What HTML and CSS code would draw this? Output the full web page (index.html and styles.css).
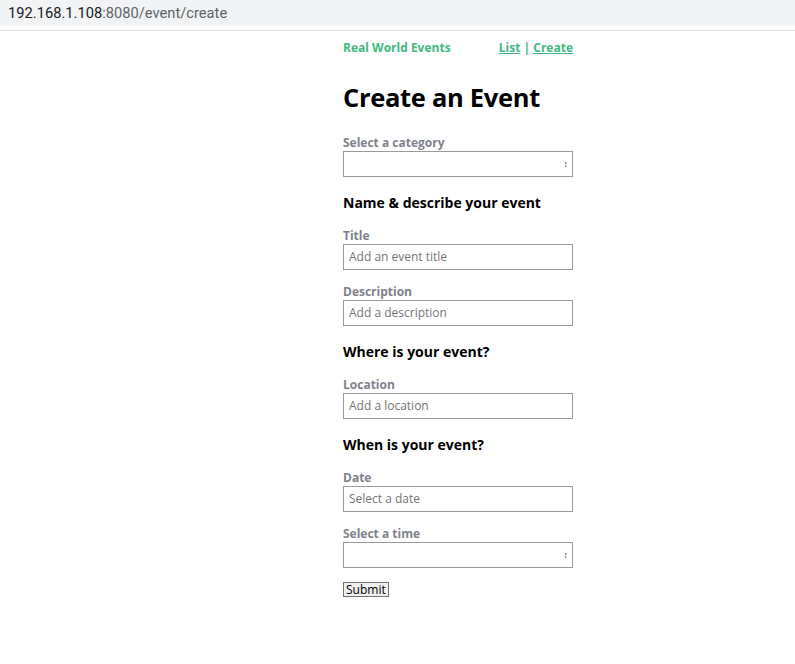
FILE: index.html
```html
<!DOCTYPE html>
<html>
<head>
<meta charset="utf-8">
<link rel="stylesheet" href="styles.css">
</head>
<body>
<div class="urlbar"><span class="host">192.168.1.108</span><span class="rest">:8080/event/create</span></div>
<div class="urlline"></div>
<div class="app">
  <nav class="nav">
    <span class="brand">Real World Events</span>
    <span class="links"><a href="#">List</a> | <a href="#">Create</a></span>
  </nav>
  <h1 class="title">Create an Event</h1>
  <form class="form">
    <label class="label first">Select a category</label>
    <div class="select"><span class="arrows">&#8597;</span></div>
    <h3 class="section">Name &amp; describe your event</h3>
    <label class="label">Title</label>
    <div class="input">Add an event title</div>
    <label class="label">Description</label>
    <div class="input">Add a description</div>
    <h3 class="section">Where is your event?</h3>
    <label class="label">Location</label>
    <div class="input">Add a location</div>
    <h3 class="section">When is your event?</h3>
    <label class="label">Date</label>
    <div class="input">Select a date</div>
    <label class="label">Select a time</label>
    <div class="select"><span class="arrows">&#8597;</span></div>
    <div class="submitrow"><span class="submit">Submit</span></div>
  </form>
</div>
</body>
</html>
```
FILE: styles.css
```css
html, body { margin: 0; padding: 0; background: #fff; }
body { font-family: "Open Sans", "Noto Sans", sans-serif; }
.urlbar {
  height: 26px;
  background: #f1f3f4;
  font-family: "Roboto", "Liberation Sans", sans-serif;
  font-size: 14.7px;
  line-height: 26px;
  padding-left: 8px;
}
.host { color: #202124; }
.rest { color: #5f6368; }
.urlline { height: 1px; background: #dadce0; margin-top: 4px; }
.app { width: 230px; margin-left: 343px; display: flex; flex-direction: column; }
.nav { display: flex; justify-content: space-between; margin-top: 9px; font-size: 12px; font-weight: 700; line-height: 16px; color: #42b983; }
.nav a { color: #42b983; text-decoration: underline; }
.title { font-size: 25.5px; font-weight: 700; margin: 24px 0 0; line-height: 34px; letter-spacing: -0.3px; color: #000; }
.form { display: flex; flex-direction: column; }
.label { font-size: 12px; font-weight: 700; color: #7f828b; line-height: 16px; margin-top: 14px; }
.label.first { margin-top: 21px; }
.select, .input {
  box-sizing: border-box;
  height: 26px;
  border: 1px solid #999;
  position: relative;
  margin-top: 0;
}
.input { font-size: 12px; color: #757575; line-height: 24px; padding-left: 5px; }
.arrows { position: absolute; right: 4px; top: 6px; font-size: 9px; color: #444; line-height: 12px; }
.section { font-size: 14px; font-weight: 700; margin: 17px 0 0; line-height: 18px; color: #000; }
.section + .label { margin-top: 16px; }
.submitrow { margin-top: 14px; display: flex; }
.submit {
  font-family: "Open Sans", sans-serif;
  font-size: 12px;
  line-height: 13px;
  padding: 0 2px;
  border: 1px solid #767676;
  background: #efefef;
  color: #000;
}
```
